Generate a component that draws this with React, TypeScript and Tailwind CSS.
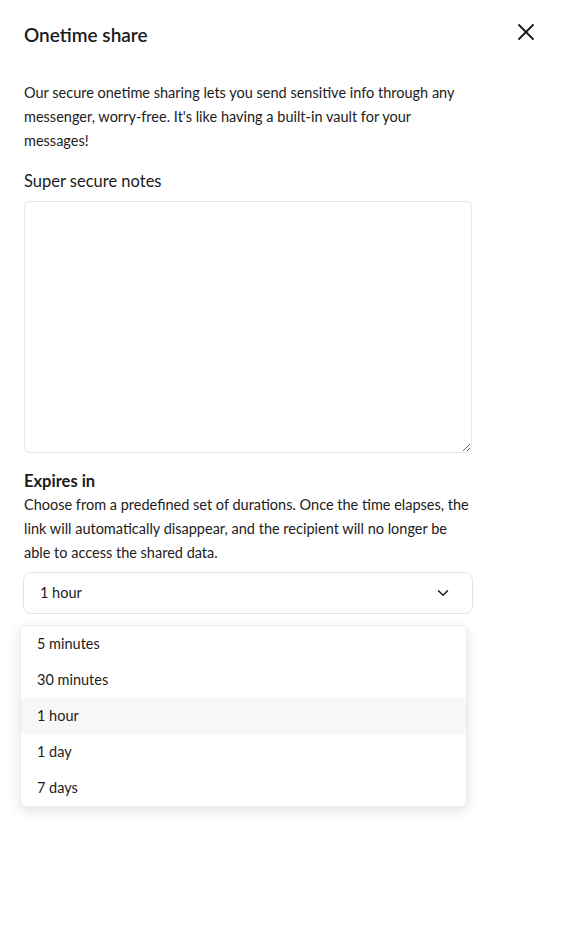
import { X, ChevronDown } from "lucide-react";

const options = ["5 minutes", "30 minutes", "1 hour", "1 day", "7 days"];

export default function App() {
  const selected = "1 hour";

  return (
    <div className="min-h-[926px] w-full bg-white text-[#1c1c1c] font-['Lato',sans-serif]">
      <div className="px-6 pt-[22px]">
        {/* HEADER */}
        <div className="flex items-center justify-between">
          <h1 className="text-[19px] font-semibold leading-[26px]">Onetime share</h1>
          <button className="-mt-[7px] mr-[-2px] text-[#1c1c1c]">
            <X size={28} strokeWidth={1.6} />
          </button>
        </div>

        <div className="w-[448px]">
          {/* INTRO */}
          <p className="mt-[33px] text-[14.5px] leading-6">
            Our secure onetime sharing lets you send sensitive info through any messenger,
            worry-free. It's like having a built-in vault for your messages!
          </p>

          {/* NOTES */}
          <label className="mt-[16px] block text-[16.5px] leading-6">Super secure notes</label>
          <textarea className="mt-2 block h-[252px] w-full resize-y rounded-md border border-[#e6e6e6] p-3 text-sm outline-none" />

          {/* EXPIRES */}
          <h2 className="mt-[16px] text-[16.5px] font-bold leading-6">Expires in</h2>
          <p className="text-[14.5px] leading-6">
            Choose from a predefined set of durations. Once the time elapses, the link will
            automatically disappear, and the recipient will no longer be able to access the shared
            data.
          </p>

          <div className="relative mt-[7px]">
            <button className="-mx-px flex h-[42px] w-[450px] items-center justify-between rounded-lg border border-[#e4e4e4] pl-4 pr-5 text-[14.5px]">
              <span>{selected}</span>
              <ChevronDown size={18} strokeWidth={2} />
            </button>

            <ul className="absolute left-[-4px] top-[53px] w-[447px] overflow-hidden rounded-md border border-[#ececec] bg-white shadow-[0_4px_14px_rgba(0,0,0,0.12)]">
              {options.map((o) => (
                <li
                  key={o}
                  className={`flex h-9 items-center px-4 text-[14.5px] ${
                    o === selected ? "bg-[#f7f7f7]" : ""
                  }`}
                >
                  {o}
                </li>
              ))}
            </ul>
          </div>
        </div>
      </div>
    </div>
  );
}
